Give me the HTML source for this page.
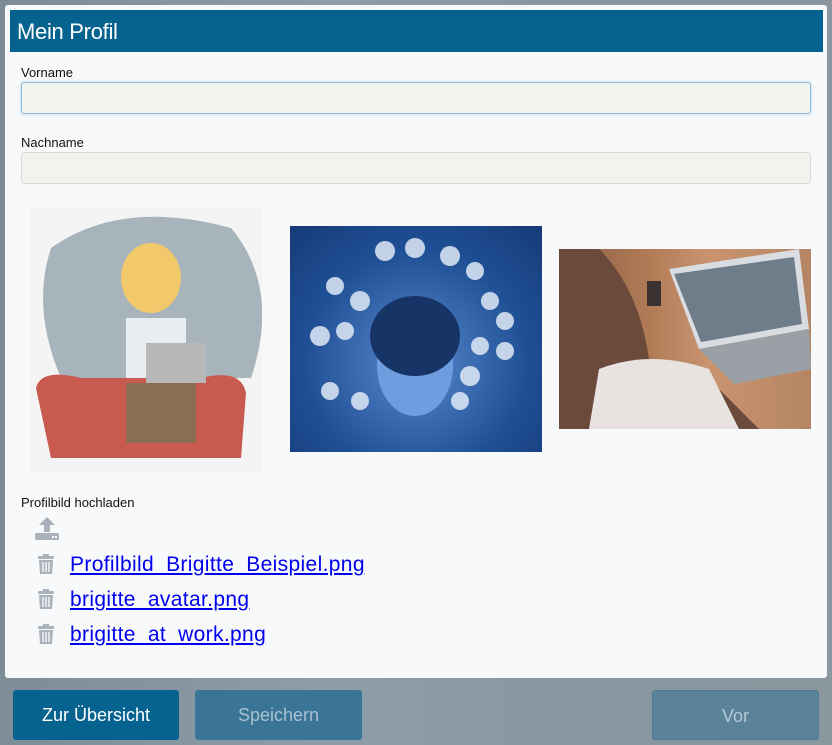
<!DOCTYPE html>
<html><head><meta charset="utf-8"><style>
*{box-sizing:border-box;margin:0;padding:0}
body{width:832px;height:745px;overflow:hidden;font-family:"Liberation Sans",sans-serif;background:linear-gradient(90deg,#7d8d97 0%,#8e9ea8 40%,#8796a0 70%,#8a979f 100%);position:relative}
.card{position:absolute;left:5px;top:5px;width:822px;height:673px;background:#f7f9fb;border-radius:3px}
.hdr{position:absolute;left:10px;top:10px;width:813px;height:42px;background:#06638f;color:#fff;font-size:22px;padding:9px 0 0 7px;letter-spacing:-0.3px;font-weight:normal}
.lbl{position:absolute;left:21px;font-size:13px;color:#111}
.inp{position:absolute;left:21px;width:790px;height:32px;background:#f2f2ee;border:1px solid #dcdcd6;border-radius:3px}
.inp.f{border-color:#8fb6d2;box-shadow:0 0 3px #bcd6ea}
a{position:absolute;left:70px;font-size:21px;letter-spacing:0.35px;color:#0000ee;text-decoration:underline}
.tr{position:absolute;left:37px;width:18px;height:20px}
.btn{position:absolute;top:690px;height:50px;border-radius:3px;color:#fff;font-size:18px;text-align:center;line-height:50px}
</style></head><body>
<div class="card"></div>
<div class="hdr">Mein Profil</div>
<div class="lbl" style="top:65px">Vorname</div>
<div class="inp f" style="top:82px"></div>
<div class="lbl" style="top:135px">Nachname</div>
<div class="inp" style="top:152px"></div>

<div style="position:absolute;left:31px;top:208px;width:231px;height:264px;background:#f4f4f4;overflow:hidden">
<svg width="231" height="264"><path d="M20 40 Q90 -10 200 20 Q250 80 220 170 L30 170 Q0 100 20 40Z" fill="#a8b4bc"/>
<path d="M5 180 Q10 160 50 170 L170 170 Q210 160 215 185 L210 250 L20 250 Z" fill="#c85a50"/>
<ellipse cx="120" cy="70" rx="30" ry="35" fill="#f2c96a"/><rect x="95" y="110" width="60" height="60" fill="#e8eef0"/>
<rect x="115" y="135" width="60" height="40" fill="#b8b8b8"/><rect x="95" y="175" width="70" height="60" fill="#8b6e52"/></svg></div>

<div style="position:absolute;left:290px;top:226px;width:252px;height:226px;background:radial-gradient(circle at 50% 60%,#5a8ad0,#1f4f95 60%,#163a78);overflow:hidden">
<svg width="252" height="226"><ellipse cx="125" cy="140" rx="38" ry="50" fill="#6f9ee0"/><ellipse cx="125" cy="110" rx="45" ry="40" fill="#163466"/>
<g fill="#dfe9f6" opacity=".85"><circle cx="45" cy="60" r="9"/><circle cx="70" cy="75" r="10"/><circle cx="95" cy="25" r="10"/><circle cx="125" cy="22" r="10"/><circle cx="160" cy="30" r="10"/><circle cx="185" cy="45" r="9"/><circle cx="200" cy="75" r="9"/><circle cx="215" cy="95" r="9"/><circle cx="30" cy="110" r="10"/><circle cx="55" cy="105" r="9"/><circle cx="190" cy="120" r="9"/><circle cx="215" cy="125" r="9"/><circle cx="40" cy="165" r="9"/><circle cx="70" cy="175" r="9"/><circle cx="180" cy="150" r="10"/><circle cx="170" cy="175" r="9"/></g></svg></div>

<div style="position:absolute;left:559px;top:249px;width:252px;height:180px;background:linear-gradient(90deg,#8a6048 0%,#b07a55 35%,#c99470 60%,#b58563 100%);overflow:hidden">
<svg width="252" height="180"><path d="M0 0 L40 0 Q80 40 90 110 L150 130 L200 180 L0 180Z" fill="#6b4a3c"/>
<path d="M40 120 Q90 100 150 120 L180 180 L30 180Z" fill="#e8e2e0"/>
<path d="M110 20 L240 0 L250 80 L140 100Z" fill="#d9dde2"/><path d="M115 25 L235 8 L243 75 L142 93Z" fill="#6f7c8a"/>
<path d="M140 100 L250 80 L252 120 L175 135Z" fill="#9aa0a6"/><rect x="88" y="32" width="14" height="25" fill="#3a3230"/></svg></div>

<div class="lbl" style="top:495px">Profilbild hochladen</div>
<svg style="position:absolute;left:34px;top:516px" width="26" height="24"><path d="M13 1 L5 9 H10 V16 H16 V9 H21Z" fill="#a9b2ba"/><rect x="1" y="17" width="24" height="7" rx="1.5" fill="#a9b2ba"/><rect x="18" y="20" width="2" height="2" fill="#fff"/><rect x="21" y="20" width="2" height="2" fill="#fff"/></svg>

<svg class="tr" style="top:554px" viewBox="0 0 18 20"><rect x="1" y="2" width="16" height="3" rx="1" fill="#a9b2ba"/><rect x="6" y="0" width="6" height="3" fill="#a9b2ba"/><path d="M2 6 H16 L15 20 H3Z" fill="#a9b2ba"/><path d="M6 8V18M9 8V18M12 8V18" stroke="#fff" stroke-width="1.3"/></svg>
<a style="top:553px">Profilbild_Brigitte_Beispiel.png</a>
<svg class="tr" style="top:589px" viewBox="0 0 18 20"><rect x="1" y="2" width="16" height="3" rx="1" fill="#a9b2ba"/><rect x="6" y="0" width="6" height="3" fill="#a9b2ba"/><path d="M2 6 H16 L15 20 H3Z" fill="#a9b2ba"/><path d="M6 8V18M9 8V18M12 8V18" stroke="#fff" stroke-width="1.3"/></svg>
<a style="top:588px">brigitte_avatar.png</a>
<svg class="tr" style="top:624px" viewBox="0 0 18 20"><rect x="1" y="2" width="16" height="3" rx="1" fill="#a9b2ba"/><rect x="6" y="0" width="6" height="3" fill="#a9b2ba"/><path d="M2 6 H16 L15 20 H3Z" fill="#a9b2ba"/><path d="M6 8V18M9 8V18M12 8V18" stroke="#fff" stroke-width="1.3"/></svg>
<a style="top:623px">brigitte_at_work.png</a>

<div class="btn" style="left:13px;width:166px;background:#06638f">Zur Übersicht</div>
<div class="btn" style="left:195px;width:167px;background:#3a7597;color:#a9c0cf">Speichern</div>
<div class="btn" style="left:652px;width:167px;background:#5a8299;border:1px solid #4f7a93;color:#b6cad6">Vor</div>
</body></html>
